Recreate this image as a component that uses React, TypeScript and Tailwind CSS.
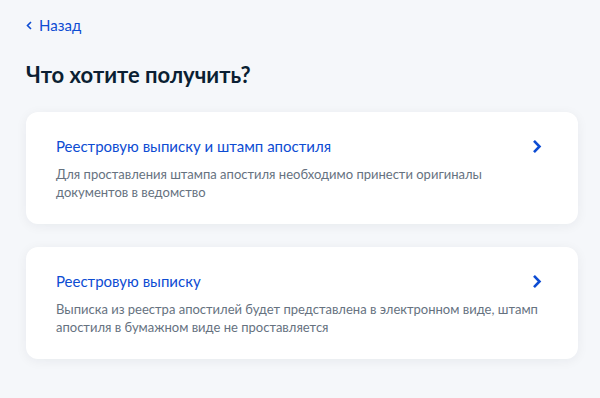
import type { SVGProps } from "react";

type Option = {
  title: string;
  description: string;
};

const options: Option[] = [
  {
    title: "Реестровую выписку и штамп апостиля",
    description:
      "Для проставления штампа апостиля необходимо принести оригиналы документов в ведомство",
  },
  {
    title: "Реестровую выписку",
    description:
      "Выписка из реестра апостилей будет представлена в электронном виде, штамп апостиля в бумажном виде не проставляется",
  },
];

export default function App() {
  return (
    <div
      className="min-h-[398px] w-[600px] bg-[#f5f7fa] pl-[26px] pr-[22px] pt-[15px]"
      style={{ fontFamily: "Lato, 'Noto Sans', sans-serif" }}
    >
      <button type="button" className="flex items-center gap-[7px] text-[15px] leading-5 text-[#0d4cd3]">
        <IconChevronLeft className="h-[9px] w-[6px]" />
        Назад
      </button>

      <h1 className="mt-[26px] text-[22px] font-bold leading-7 text-[#0b1f33]">
        Что хотите получить?
      </h1>

      <div className="mt-[23px] flex flex-col gap-[23px]">
        {options.map((option) => (
          <button
            key={option.title}
            type="button"
            className="flex h-[112px] w-full flex-col rounded-[12px] bg-white pl-[30px] pr-[36px] pt-[24px] text-left shadow-[0_2px_12px_rgba(11,31,51,0.06)]"
          >
            <div className="flex w-full items-center justify-between">
              <span className="text-[15px] leading-5 text-[#0d4cd3]">{option.title}</span>
              <IconChevronRight className="h-[15px] w-[10px] text-[#0d4cd3]" />
            </div>
            <p className="mt-[9px] max-w-[488px] text-[13px] leading-[18px] text-[#66727f]">
              {option.description}
            </p>
          </button>
        ))}
      </div>
    </div>
  );
}

function IconChevronLeft(props: SVGProps<SVGSVGElement>) {
  return (
    <svg viewBox="0 0 6 9" fill="none" stroke="currentColor" strokeWidth="1.6" {...props}>
      <path d="M5 1L1.5 4.5L5 8" />
    </svg>
  );
}

function IconChevronRight(props: SVGProps<SVGSVGElement>) {
  return (
    <svg viewBox="0 0 10 15" fill="none" stroke="currentColor" strokeWidth="2.6" {...props}>
      <path d="M2 1.8L7.5 7.5L2 13.2" />
    </svg>
  );
}
